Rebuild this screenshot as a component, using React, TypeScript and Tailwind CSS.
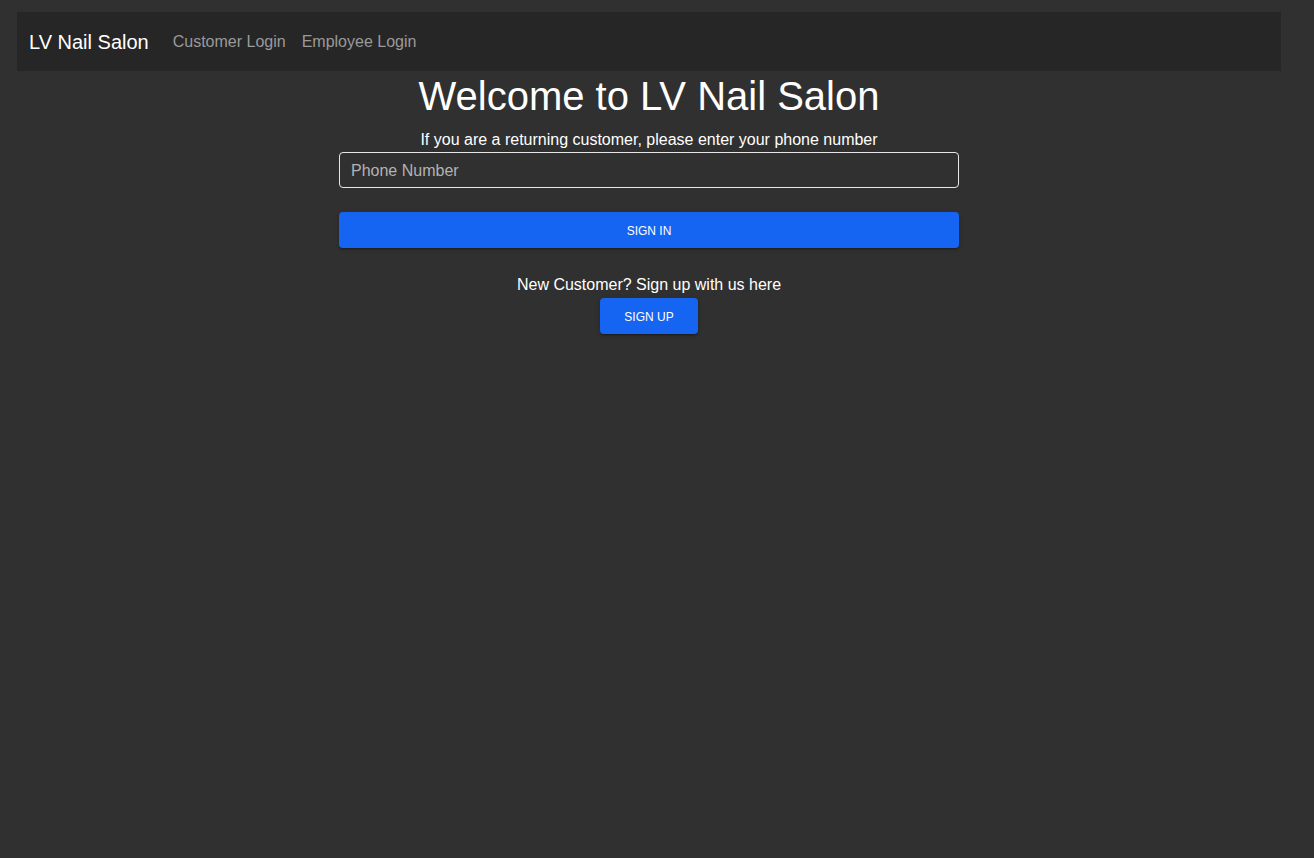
export default function App() {
  return (
    <div className="min-h-[858px] bg-[#303030] pr-[16px] pt-[12px] font-['Liberation_Sans',Arial,sans-serif] text-white">
      <nav className="mx-[17px] flex h-[59px] items-center bg-[#262626] px-[12px]">
        <span className="text-[20px] text-white">LV Nail Salon</span>
        <div className="ml-[24px] flex gap-[16px] text-[16px] text-[#9a9a9a]">
          <a>Customer Login</a>
          <a>Employee Login</a>
        </div>
      </nav>
      <main className="flex flex-col items-center">
        <h1 className="mt-[1px] text-[40px] leading-[48px]">Welcome to LV Nail Salon</h1>
        <p className="mt-[11px] text-[16px] leading-[18px]">
          If you are a returning customer, please enter your phone number
        </p>
        <input
          placeholder="Phone Number"
          className="mt-[3px] h-[36px] w-[620px] rounded-[4px] border border-[#e6e6e6] bg-transparent px-[11px] pt-[1px] text-[16px] text-white outline-none placeholder:text-[#b3b3b3]"
        />
        <button className="mt-[24px] h-[36px] w-[620px] rounded-[4px] bg-[#1565f2] pt-[1px] text-[12px] font-medium uppercase text-white shadow-[0_3px_1px_-2px_rgba(0,0,0,0.2),0_2px_2px_0_rgba(0,0,0,0.14),0_1px_5px_0_rgba(0,0,0,0.12)]">
          Sign In
        </button>
        <p className="mt-[28px] text-[16px] leading-[18px]">New Customer? Sign up with us here</p>
        <button className="mt-[4px] h-[36px] w-[98px] rounded-[4px] bg-[#1565f2] pt-[1px] text-[12px] font-medium uppercase text-white shadow-[0_3px_1px_-2px_rgba(0,0,0,0.2),0_2px_2px_0_rgba(0,0,0,0.14),0_1px_5px_0_rgba(0,0,0,0.12)]">
          Sign Up
        </button>
      </main>
    </div>
  )
}
